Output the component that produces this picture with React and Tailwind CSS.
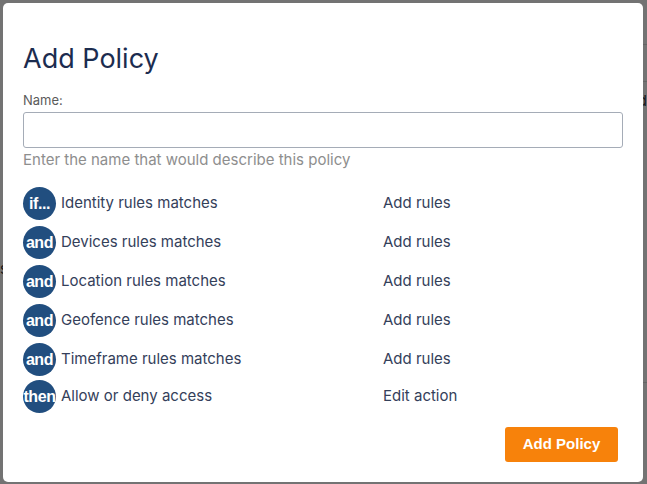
const RULES = [
  { tag: 'if...', label: 'Identity rules matches', action: 'Add rules' },
  { tag: 'and', label: 'Devices rules matches', action: 'Add rules' },
  { tag: 'and', label: 'Location rules matches', action: 'Add rules' },
  { tag: 'and', label: 'Geofence rules matches', action: 'Add rules' },
  { tag: 'and', label: 'Timeframe rules matches', action: 'Add rules' },
];

const BACKDROP_LINES = ['Name', 'enabled', 'inherit', 'peers', 'offset', 'remote', 'weekly'];

function Badge({ children }) {
  return (
    <div className="w-[33px] h-[33px] shrink-0 rounded-full bg-[#214e7f] flex items-center justify-center overflow-visible">
      <span className="text-white font-bold text-[16px] leading-none tracking-[-0.4px] whitespace-nowrap" style={{ fontFamily: '"Liberation Sans", Arial, sans-serif' }}>
        {children}
      </span>
    </div>
  );
}

function Row({ tag, label, action, className = '' }) {
  return (
    <div className={`flex items-center h-[33px] ${className}`}>
      <div className="w-[360px] flex items-center gap-[5px]">
        <Badge>{tag}</Badge>
        <span className="text-[15px] text-[#34405a]">{label}</span>
      </div>
      <span className="text-[15px] text-[#34405a]">{action}</span>
    </div>
  );
}

export default function App() {
  return (
    <div className="relative w-full h-[484px] overflow-hidden bg-white" style={{ fontFamily: 'Inter, "Noto Sans", sans-serif' }}>
      {/* page behind the dialog */}
      <div className="flex h-full">
        <div className="w-[640px] pt-[256px]">
          <span className="text-[15px] text-[#333]">s</span>
        </div>
        <div className="flex-1 flex flex-col">
          <div className="h-[44px]" />
          <div className="h-[38px] border-y border-[#ddd] flex items-center text-[15px] text-[#333]">Name</div>
          {BACKDROP_LINES.slice(1).map((line) => (
            <div key={line} className="h-[38px] flex items-center text-[15px] text-[#333] first:mt-[36px]">{line}</div>
          ))}
          <div className="mt-[72px] border-t border-[#ddd]" />
        </div>
      </div>
      <div className="absolute inset-0 bg-black/55" />

      {/* Add Policy dialog */}
      <div className="absolute left-[3px] top-[3px] w-[640px] h-[479px] bg-white rounded-[5px] pl-[20px] pr-[21px] pt-[40px]">
        <h1 className="text-[27px] leading-[32px] text-[#1c2c4f]">Add Policy</h1>

        <label className="block mt-[17px] text-[13px] leading-[16px] text-[#5b5b5b]">Name:</label>
        <input type="text" className="block mt-[4px] w-[600px] h-[36px] border border-[#a5acb7] rounded-[3px] px-2 text-[15px] outline-none" />
        <p className="mt-[2px] text-[15px] leading-[20px] text-[#8e8e8e]">Enter the name that would describe this policy</p>

        <div className="mt-[17px] flex flex-col gap-[6px]">
          {RULES.map((r) => (
            <Row key={r.label} {...r} />
          ))}
          <Row tag="then" label="Allow or deny access" action="Edit action" className="-mt-[2px]" />
        </div>

        <div className="mt-[14px] flex justify-end pr-[4px]">
          <button
            className="w-[113px] h-[35px] rounded-[3px] bg-[#f7820b] text-white font-bold text-[15px]"
            style={{ fontFamily: '"Liberation Sans", Arial, sans-serif' }}
          >
            Add Policy
          </button>
        </div>
      </div>
    </div>
  );
}
